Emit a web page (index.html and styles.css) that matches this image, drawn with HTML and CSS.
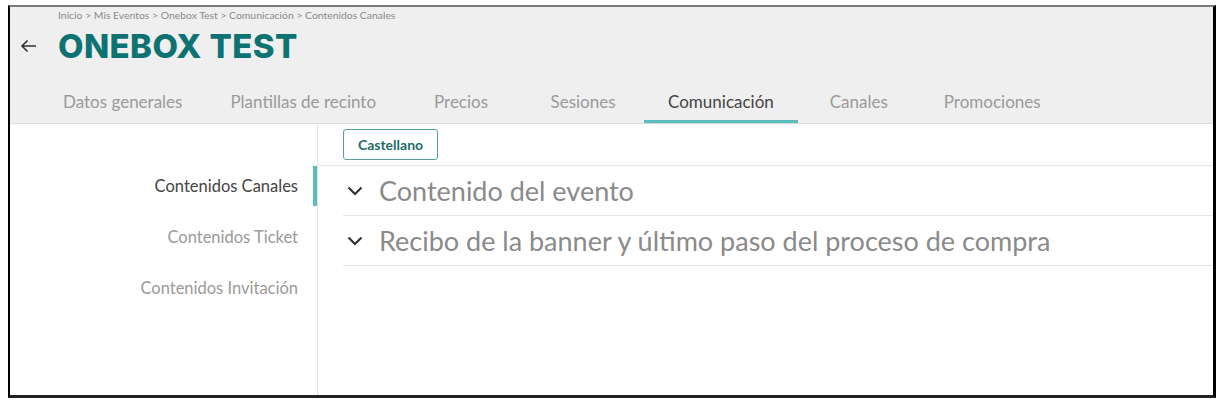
FILE: index.html
```html
<!DOCTYPE html>
<html>
  <head>
    <title>Onebox Test - Contenidos Canales</title>
    <meta charset="utf-8">
    <link rel="stylesheet" href="styles.css">
  </head>
  <body>
    <div class="frame">
      <header class="header">
        <div class="breadcrumb">Inicio &gt; Mis Eventos &gt; Onebox Test &gt; Comunicación &gt; Contenidos Canales</div>
        <div class="title-row">
          <svg class="back" width="17" height="14" viewBox="0 0 17 14">
            <path d="M16 7H2M7.5 1.5L2 7l5.5 5.5" fill="none" stroke="#333" stroke-width="1.6"/>
          </svg>
          <h1 class="title">ONEBOX TEST</h1>
        </div>
        <nav class="tabs">
          <a class="tab">Datos generales</a>
          <a class="tab">Plantillas de recinto</a>
          <a class="tab">Precios</a>
          <a class="tab">Sesiones</a>
          <a class="tab active">Comunicación</a>
          <a class="tab">Canales</a>
          <a class="tab">Promociones</a>
        </nav>
      </header>
      <div class="main">
        <aside class="sidebar">
          <a class="side-item active">Contenidos Canales</a>
          <a class="side-item">Contenidos Ticket</a>
          <a class="side-item">Contenidos Invitación</a>
        </aside>
        <section class="content">
          <div class="toolbar">
            <button type="button" class="lang">Castellano</button>
          </div>
          <div class="panel">
            <svg class="chevron" width="16" height="10" viewBox="0 0 16 10">
              <path d="M1.5 1.5l6.5 6.5 6.5-6.5" fill="none" stroke="#333" stroke-width="2.2"/>
            </svg>
            <span>Contenido del evento</span>
          </div>
          <div class="panel">
            <svg class="chevron" width="16" height="10" viewBox="0 0 16 10">
              <path d="M1.5 1.5l6.5 6.5 6.5-6.5" fill="none" stroke="#333" stroke-width="2.2"/>
            </svg>
            <span>Recibo de la banner y último paso del proceso de compra</span>
          </div>
        </section>
      </div>
    </div>
  </body>
</html>
```

FILE: styles.css
```css
body {
  margin: 0;
  background: #fff;
  font-family: Lato, "Open Sans", sans-serif;
}
.frame {
  box-sizing: border-box;
  margin: 5px 0 0 8px;
  width: 1208px;
  height: 393px;
  border-top: 2px solid #7a7a7a;
  border-left: 2px solid #000;
  border-right: 3px solid #000;
  border-bottom: 3px solid #222;
  display: flex;
  flex-direction: column;
}
.header {
  background-color: #efefef;
  border-bottom: 1px solid #dcdcdc;
}
.breadcrumb {
  padding: 2px 0 0 48px;
  font-size: 10.4px;
  line-height: 12px;
  color: #8a8a8a;
}
.title-row {
  display: flex;
  align-items: center;
  margin-top: 5px;
  padding-left: 10px;
  height: 40px;
}
.back {
  margin-right: 21px;
}
.title {
  margin: 0;
  font-family: Inter, "Open Sans", sans-serif;
  font-weight: 800;
  font-size: 33px;
  line-height: 40px;
  letter-spacing: 0.4px;
  color: #0d7272;
}
.tabs {
  display: flex;
  margin-top: 13px;
  padding-left: 29px;
}
.tab {
  box-sizing: border-box;
  height: 44px;
  min-width: 122px;
  padding: 10px 24px 0;
  line-height: 26px;
  text-align: center;
  font-size: 17px;
  color: #9a9a9a;
  border-bottom: 3px solid transparent;
}
.tab.active {
  color: #444;
  border-bottom-color: #5cbcbc;
}
.main {
  flex: 1;
  display: flex;
}
.sidebar {
  box-sizing: border-box;
  width: 308px;
  padding-top: 42px;
  border-right: 1px solid #e2e2e2;
  display: flex;
  flex-direction: column;
  gap: 11px;
}
.side-item {
  height: 40px;
  line-height: 40px;
  padding-right: 15px;
  text-align: right;
  font-size: 16.5px;
  color: #9a9a9a;
  border-right: 4px solid transparent;
}
.side-item.active {
  color: #444;
  border-right-color: #5cbcbc;
}
.content {
  flex: 1;
}
.toolbar {
  padding: 5px 0 5px 25px;
  border-bottom: 1px solid #e6e6e6;
}
.lang {
  box-sizing: border-box;
  height: 31px;
  width: 95px;
  padding: 0;
  background: #fff;
  border: 1px solid #5a9f9f;
  border-radius: 3px;
  font-family: Lato, sans-serif;
  font-weight: 700;
  font-size: 14px;
  color: #1d6b6b;
}
.panel {
  display: flex;
  align-items: center;
  height: 49px;
  margin-left: 25px;
  padding-left: 4px;
  border-bottom: 1px solid #e6e6e6;
  font-size: 27px;
  color: #8a8a8a;
}
.chevron {
  margin-right: 16px;
}
```
